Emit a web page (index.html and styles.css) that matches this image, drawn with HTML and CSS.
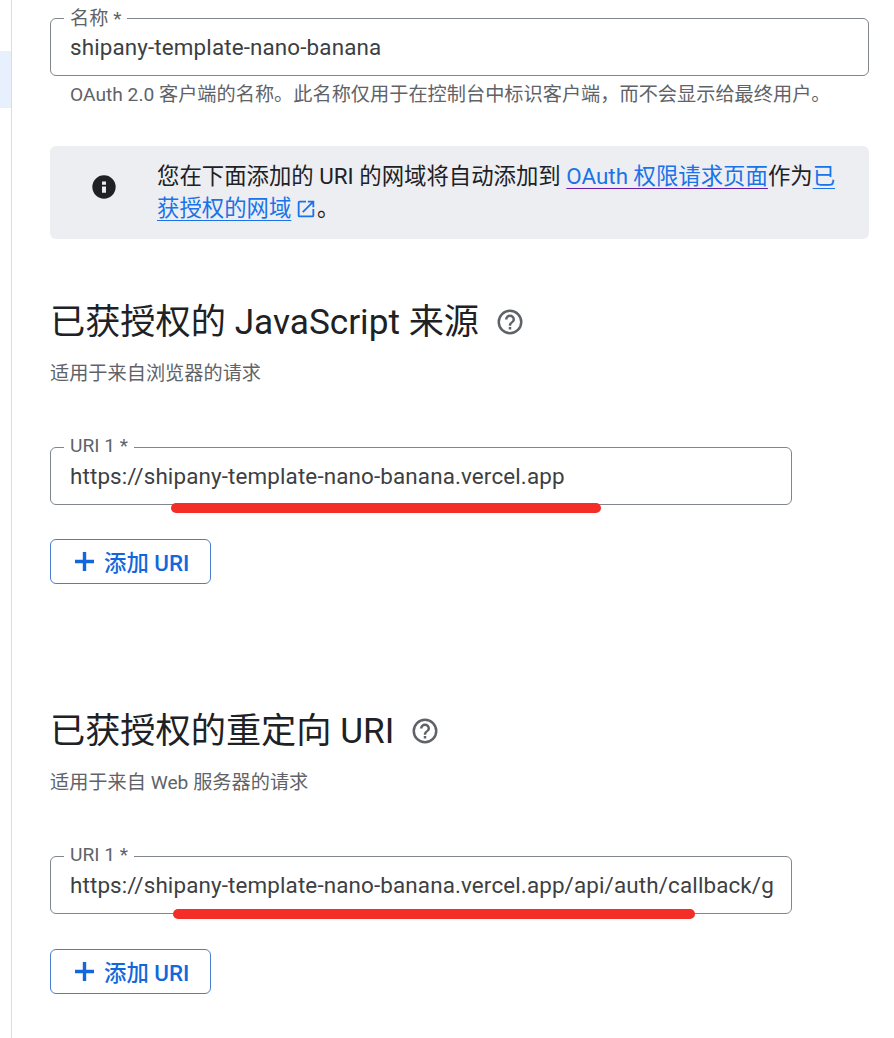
FILE: index.html
```html
<!DOCTYPE html>
<html lang="zh-CN">

<head>
    <meta charset="UTF-8">
    <meta name="viewport" content="width=device-width, initial-scale=1.0">
    <title>OAuth 客户端</title>
    <link rel="stylesheet" href="styles.css">
</head>

<body>
    <div class="page">
        <div class="sidebar">
            <div class="sidebar-active"></div>
        </div>

        <main class="content">
            <div class="field field-name">
                <span class="field-label">名称 *</span>
                <div class="field-value">shipany-template-nano-banana</div>
            </div>
            <p class="hint">OAuth 2.0 客户端的名称。此名称仅用于在控制台中标识客户端，而不会显示给最终用户。</p>

            <div class="notice">
                <svg class="notice-icon" viewBox="0 0 24 24" width="28" height="28">
                    <path fill="#202124" fill-rule="evenodd" d="M12 2a10 10 0 1 0 0 20 10 10 0 0 0 0-20zM13.700 17h-3.400v-5.500h3.400V17zm0-7h-3.400V7.200h3.400V10z" />
                </svg>
                <p class="notice-text">您在下面添加的 URI 的网域将自动添加到 <a class="link link-visited" href="#">OAuth 权限请求页面</a>作为<a class="link" href="#">已获授权的网域</a> <svg class="external" viewBox="0 0 24 24" width="22" height="22">
                        <path fill="#1a73e8" d="M19 19H5V5h7V3H5a2 2 0 0 0-2 2v14a2 2 0 0 0 2 2h14a2 2 0 0 0 2-2v-7h-2v7zM14 3v2h3.600l-9.800 9.800 1.400 1.400L19 6.400V10h2V3h-7z" />
                    </svg>。</p>
            </div>

            <section class="section section-origins">
                <h2 class="section-title">已获授权的 JavaScript 来源
                    <svg class="help" viewBox="0 0 24 24" width="30" height="30">
                        <path fill="#5f6368" d="M11 18h2v-2h-2v2zm1-16a10 10 0 1 0 0 20 10 10 0 0 0 0-20zm0 18a8 8 0 1 1 0-16 8 8 0 0 1 0 16zm0-14a4 4 0 0 0-4 4h2a2 2 0 1 1 4 0c0 2-3 1.750-3 5h2c0-2.250 3-2.500 3-5a4 4 0 0 0-4-4z" />
                    </svg>
                </h2>
                <p class="section-desc">适用于来自浏览器的请求</p>
                <div class="field field-uri">
                    <span class="field-label">URI 1 *</span>
                    <div class="field-value">https://shipany-template-nano-banana.vercel.app</div>
                    <span class="redline redline-origin"></span>
                </div>
                <button class="add-btn" type="button">
                    <svg viewBox="0 0 21 21" width="21" height="21">
                        <path fill="#1367dc" d="M8.800 1h3.400v7.800H20v3.400h-7.800V20H8.800v-7.800H1V8.800h7.800z" />
                    </svg>
                    添加 URI
                </button>
            </section>

            <section class="section section-redirects">
                <h2 class="section-title">已获授权的重定向 URI
                    <svg class="help" viewBox="0 0 24 24" width="30" height="30">
                        <path fill="#5f6368" d="M11 18h2v-2h-2v2zm1-16a10 10 0 1 0 0 20 10 10 0 0 0 0-20zm0 18a8 8 0 1 1 0-16 8 8 0 0 1 0 16zm0-14a4 4 0 0 0-4 4h2a2 2 0 1 1 4 0c0 2-3 1.750-3 5h2c0-2.250 3-2.500 3-5a4 4 0 0 0-4-4z" />
                    </svg>
                </h2>
                <p class="section-desc">适用于来自 Web 服务器的请求</p>
                <div class="field field-uri">
                    <span class="field-label">URI 1 *</span>
                    <div class="field-value">https://shipany-template-nano-banana.vercel.app/api/auth/callback/g</div>
                    <span class="redline redline-redirect"></span>
                </div>
                <button class="add-btn" type="button">
                    <svg viewBox="0 0 21 21" width="21" height="21">
                        <path fill="#1367dc" d="M8.800 1h3.400v7.800H20v3.400h-7.800V20H8.800v-7.800H1V8.800h7.800z" />
                    </svg>
                    添加 URI
                </button>
            </section>
        </main>
    </div>
</body>

</html>
```

FILE: styles.css
```css
html,
body {
    margin: 0;
    padding: 0;
    height: 100%;
    overflow: hidden;
}

body {
    font-family: Roboto, "Noto Sans CJK SC", sans-serif;
    background-color: #fff;
    color: #202124;
}

.page {
    display: flex;
    height: 1038px;
}

.sidebar {
    flex: none;
    width: 11px;
    padding-top: 51px;
    border-right: 1px solid #dadce0;
}

.sidebar-active {
    height: 57px;
    background-color: #e8f0fe;
}

.content {
    flex: none;
    width: 819px;
    margin-left: 38px;
    padding-top: 18px;
}

.field {
    position: relative;
    box-sizing: border-box;
    height: 58px;
    padding: 0 10px 0 19px;
    border: 1px solid #80868b;
    border-radius: 6px;
    display: flex;
    align-items: center;
}

.field-label {
    position: absolute;
    top: -13px;
    left: 13px;
    padding: 0 6px;
    background-color: #fff;
    color: #5f6368;
    font-size: 19.2px;
    line-height: 22px;
}

.field-name .field-label {
    top: -10px;
    line-height: 20px;
}

.field-value {
    font-size: 22.4px;
    line-height: 28px;
    letter-spacing: 0.14px;
    color: #3c4043;
    white-space: nowrap;
}

.hint {
    margin: 6px 0 0 20px;
    font-size: 19.2px;
    line-height: 26px;
    color: #5f6368;
}

.notice {
    display: flex;
    align-items: flex-start;
    box-sizing: border-box;
    height: 93px;
    margin-top: 38px;
    padding: 14px 24px 0 40px;
    background-color: #edeef2;
    border-radius: 6px;
}

.notice-icon {
    flex: none;
    margin-top: 13px;
}

.notice-text {
    margin: 0 0 0 39px;
    font-size: 22.4px;
    line-height: 32px;
    color: #202124;
}

.link {
    color: #1a73e8;
    text-decoration: underline 1px #1a73e8;
    text-underline-offset: 4px;
}

.link-visited {
    text-decoration-color: #681da8;
}

.external {
    margin-left: -2px;
    vertical-align: -4px;
}

.section-origins {
    margin-top: 60px;
}

.section-redirects {
    margin-top: 124px;
}

.section-title {
    display: flex;
    align-items: center;
    gap: 16px;
    margin: 0;
    font-size: 35.2px;
    font-weight: 400;
    line-height: 46px;
    color: #202124;
}

.section-desc {
    margin: 15px 0 0;
    font-size: 19.2px;
    line-height: 28px;
    color: #5f6368;
}

.section .field-uri {
    width: 742px;
    margin-top: 59px;
}

.redline {
    position: absolute;
    height: 10px;
    border-radius: 5px;
    background-color: #f42d27;
}

.redline-origin {
    top: 55px;
    left: 120px;
    width: 430px;
}

.redline-redirect {
    top: 52px;
    left: 122px;
    width: 522px;
}

.add-btn {
    display: flex;
    align-items: center;
    gap: 9px;
    box-sizing: border-box;
    width: 161px;
    height: 45px;
    margin-top: 34px;
    padding: 0 0 2px 23px;
    background-color: #fff;
    border: 1px solid #4a7fd0;
    border-radius: 6px;
    color: #1367dc;
    font-family: inherit;
    font-size: 22.4px;
    font-weight: 500;
}

.add-btn svg {
    margin-top: 2px;
}

.section-redirects .add-btn {
    margin-top: 35px;
}
```
